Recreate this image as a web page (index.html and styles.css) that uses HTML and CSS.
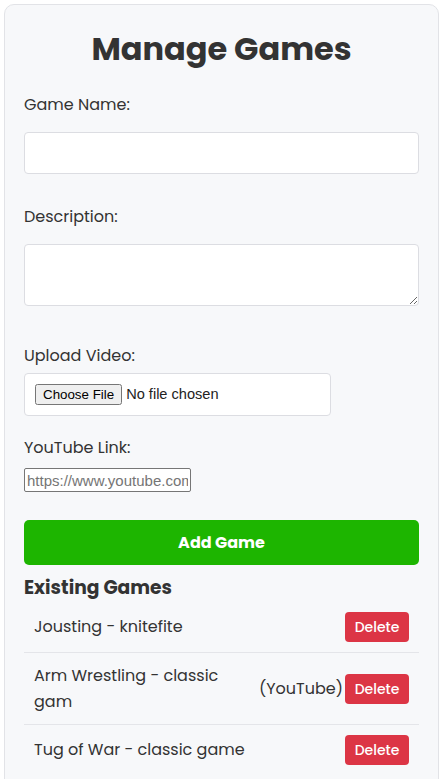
FILE: index.html
```html
<!DOCTYPE html>
<html>
<head>
<meta charset="utf-8">
<link rel="stylesheet" href="styles.css">
</head>
<body>
<div class="card">
  <h1 class="title">Manage Games</h1>
  <form class="form">
    <label class="label label-first">Game Name:</label>
    <input class="field" type="text">
    <label class="label label-desc">Description:</label>
    <textarea class="field area"></textarea>
    <label class="label label-upload">Upload Video:</label>
    <div class="filebox"><input class="file" type="file"></div>
    <label class="label label-yt">YouTube Link:</label>
    <input class="yt" type="text" placeholder="https://www.youtube.com/watch?v=...">
    <button class="add" type="button">Add Game</button>
  </form>
  <h2 class="sub">Existing Games</h2>
  <ul class="list">
    <li class="item"><span class="name">Jousting - knitefite</span><button class="del" type="button">Delete</button></li>
    <li class="item"><span class="name">Arm Wrestling - classic gam</span><span class="src">(YouTube)</span><button class="del" type="button">Delete</button></li>
    <li class="item"><span class="name">Tug of War - classic game</span><button class="del" type="button">Delete</button></li>
  </ul>
</div>
</body>
</html>
```
FILE: styles.css
```css
html, body {
  margin: 0;
  background: #ffffff;
}
body {
  padding: 4px 4px 0 4px;
  font-family: Poppins, "Open Sans", sans-serif;
  color: #333333;
}
.card {
  width: 435px;
  box-sizing: border-box;
  background: #f7f8fa;
  border: 1px solid #e2e3e7;
  border-radius: 10px;
  padding: 23px 19px 20px 19px;
  min-height: 800px;
}
.title {
  margin: 0;
  text-align: center;
  font-size: 32px;
  line-height: 42px;
  font-weight: 700;
  color: #333333;
}
.form {
  display: flex;
  flex-direction: column;
  align-items: flex-start;
}
.label {
  display: block;
  font-size: 16px;
  line-height: 24px;
  color: #333333;
}
.label-first { margin-top: 23px; }
.label-desc { margin-top: 31px; }
.label-upload { margin-top: 38px; }
.label-yt { margin-top: 20px; }
.field {
  margin-top: 15px;
  width: 100%;
  height: 42px;
  box-sizing: border-box;
  background: #ffffff;
  border: 1px solid #dcdde2;
  border-radius: 4px;
  font-family: inherit;
  font-size: 16px;
  padding: 8px 10px;
}
.area {
  height: 62px;
  resize: vertical;
}
.filebox {
  margin-top: 5px;
  width: 307px;
  height: 43px;
  box-sizing: border-box;
  background: #ffffff;
  border: 1px solid #dcdde2;
  border-radius: 4px;
  padding: 10px 10px;
  display: flex;
  align-items: center;
}
.file {
  font-family: "Liberation Sans", Arial, sans-serif;
  font-size: 14.6px;
  color: #222222;
}
.file::file-selector-button {
  font-family: "Liberation Sans", Arial, sans-serif;
  font-size: 13.333px;
}
.yt {
  margin-top: 8px;
  width: 167px;
  height: 24px;
  box-sizing: border-box;
  border: 1px solid #767676;
  border-radius: 2px;
  padding: 1px 2px;
  font-family: "Liberation Sans", Arial, sans-serif;
  font-size: 15px;
  background: #ffffff;
}
.yt::placeholder { color: #757575; }
.add {
  margin-top: 28px;
  width: 100%;
  height: 45px;
  border: none;
  border-radius: 5px;
  background: #1db500;
  color: #ffffff;
  font-family: inherit;
  font-size: 16px;
  font-weight: 700;
}
.sub {
  margin: 11px 0 0 0;
  font-size: 18.7px;
  line-height: 24px;
  font-weight: 700;
  color: #333333;
}
.list {
  list-style: none;
  margin: 2px 0 0 0;
  padding: 0;
}
.item {
  display: flex;
  align-items: center;
  justify-content: space-between;
  padding: 10px 10px 10px 10px;
  border-bottom: 1px solid #e4e5e9;
  font-size: 16px;
  line-height: 1.6;
  color: #333333;
}
.item:last-child { border-bottom: none; }
.name { flex: 0 1 auto; }
.src { flex: 0 0 auto; margin-left: 40px; margin-right: 2px; }
.del {
  flex: 0 0 auto;
  width: 64px;
  height: 30px;
  border: none;
  border-radius: 4px;
  background: #dc3545;
  color: #ffffff;
  font-family: inherit;
  font-size: 14px;
  font-weight: 500;
  line-height: 30px;
  padding: 0;
}
```
